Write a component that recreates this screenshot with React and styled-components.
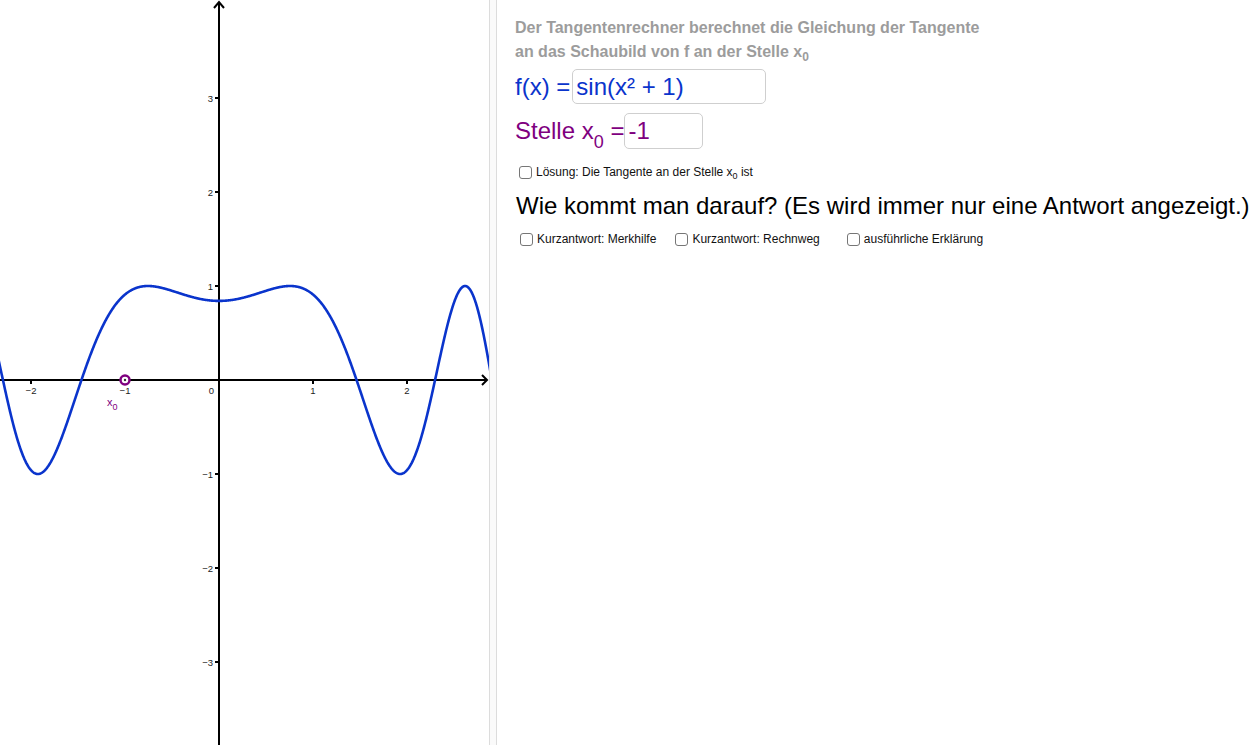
import React from 'react';
import styled, { createGlobalStyle } from 'styled-components';

const GlobalStyle = createGlobalStyle`
	html, body {
		margin: 0;
		padding: 0;
		background: #ffffff;
		overflow: hidden;
	}
	body {
		font-family: 'Liberation Sans', Arial, sans-serif;
	}
`;

const UNIT = 94;
const OX = 219;
const OY = 380;
const GRAPH_W = 489;
const GRAPH_H = 745;

const Page = styled.div`
	display: grid;
	grid-template-columns: ${GRAPH_W}px 8px 1fr;
	width: 1250px;
	height: 745px;
	overflow: hidden;
`;

const GraphPanel = styled.div`
	width: ${GRAPH_W}px;
	height: ${GRAPH_H}px;
	overflow: hidden;
`;

const Splitter = styled.div`
	border-left: 1px solid #dcdcdc;
	border-right: 1px solid #dcdcdc;
	background: #fafafa;
`;

const Algebra = styled.div`
	display: flex;
	flex-direction: column;
	align-items: flex-start;
	padding: 16px 0 0 18px;
	overflow: hidden;
	white-space: nowrap;
`;

const Intro = styled.p`
	margin: 0;
	font-size: 16px;
	font-weight: bold;
	line-height: 24px;
	color: #9c9c9c;
	sub {
		font-size: 12px;
		line-height: 0;
		vertical-align: -4px;
	}
`;

const InputRow = styled.div`
	display: flex;
	align-items: center;
	margin-top: ${({ top }) => top}px;
	color: ${({ color }) => color};
	font-size: 24px;
`;

const RowLabel = styled.span`
	padding-right: ${({ pad }) => pad}px;
	line-height: 28px;
	sub {
		font-size: 18px;
		line-height: 0;
		vertical-align: -9px;
	}
`;

const Field = styled.div`
	box-sizing: border-box;
	width: ${({ width }) => width}px;
	height: ${({ height }) => height}px;
	border: 1px solid #cfcfcf;
	border-radius: 5px;
	padding: 0 3px;
	display: flex;
	align-items: center;
	color: inherit;
`;

const CheckRow = styled.div`
	display: flex;
	align-items: center;
	margin-top: ${({ top }) => top}px;
`;

const Check = styled.label`
	display: flex;
	align-items: center;
	gap: 4px;
	font-size: 12px;
	line-height: 14px;
	color: #111;
	margin-left: ${({ indent }) => indent || 0}px;
	sub {
		font-size: 9px;
		line-height: 0;
		vertical-align: -3px;
	}
`;

const Box = styled.span`
	box-sizing: border-box;
	flex: none;
	width: 13px;
	height: 13px;
	border: 1px solid #767676;
	border-radius: 3px;
	background: #fff;
`;

const Question = styled.h2`
	margin: 13px 0 0 1px;
	font-size: 24px;
	font-weight: normal;
	color: #000;
	line-height: 28px;
`;

const TickLabel = styled.text`
	font-family: 'Liberation Sans', Arial, sans-serif;
	font-size: 9.5px;
	fill: #222;
`;

const sx = (x) => OX + UNIT * x;
const sy = (y) => OY - UNIT * y;

const curvePath = () => {
	const pts = [];
	for (let x = -2.4; x <= 2.9; x += 0.004) {
		pts.push(`${sx(x).toFixed(2)},${sy(Math.sin(x * x + 1)).toFixed(2)}`);
	}
	return 'M' + pts.join(' L');
};

const Graph = () => {
	const xTicks = [-2, -1, 1, 2];
	const yTicks = [3, 2, 1, -1, -2, -3];
	return (
		<svg width={GRAPH_W} height={GRAPH_H} viewBox={`0 0 ${GRAPH_W} ${GRAPH_H}`}>
			<line x1={0} y1={OY} x2={GRAPH_W - 2} y2={OY} stroke="#000" strokeWidth="2" />
			<polyline
				points={`${GRAPH_W - 7},${OY - 5} ${GRAPH_W - 2},${OY} ${GRAPH_W - 7},${OY + 5}`}
				fill="none"
				stroke="#000"
				strokeWidth="2"
			/>
			<line x1={OX} y1={2} x2={OX} y2={GRAPH_H} stroke="#000" strokeWidth="2" />
			<polyline
				points={`${OX - 5},${8} ${OX},${2} ${OX + 5},${8}`}
				fill="none"
				stroke="#000"
				strokeWidth="2"
			/>
			{xTicks.map((t) => (
				<g key={`x${t}`}>
					<line x1={sx(t)} y1={OY} x2={sx(t)} y2={OY + 4} stroke="#000" strokeWidth="2" />
					<TickLabel x={sx(t)} y={OY + 14} textAnchor="middle">
						{t < 0 ? `\u2212${-t}` : t}
					</TickLabel>
				</g>
			))}
			<TickLabel x={OX - 5} y={OY + 14} textAnchor="end">0</TickLabel>
			{yTicks.map((t) => (
				<g key={`y${t}`}>
					<line x1={OX - 4} y1={sy(t)} x2={OX} y2={sy(t)} stroke="#000" strokeWidth="2" />
					<TickLabel x={OX - 6} y={sy(t) + 3.5} textAnchor="end">
						{t < 0 ? `\u2212${-t}` : t}
					</TickLabel>
				</g>
			))}
			<path d={curvePath()} fill="none" stroke="#0a34cc" strokeWidth="2.6" strokeLinejoin="round" />
			<circle cx={sx(-1)} cy={OY} r="4.5" fill="#fff" stroke="#7f007f" strokeWidth="2.5" />
			<circle cx={sx(-1)} cy={OY} r="1.2" fill="#333" />
			<text x={107} y={406} fill="#7f007f" fontSize="11" fontFamily="'Liberation Sans', Arial, sans-serif">
				x
				<tspan fontSize="9" dy="4">0</tspan>
			</text>
		</svg>
	);
};

export default function App() {
	return (
		<>
			<GlobalStyle />
			<Page>
				<GraphPanel>
					<Graph />
				</GraphPanel>
				<Splitter />
				<Algebra>
					<Intro>
						Der Tangentenrechner berechnet die Gleichung der Tangente
						<br />
						an das Schaubild von f an der Stelle x<sub>0</sub>
					</Intro>
					<InputRow top={5} color="#0a34cc">
						<RowLabel pad={2}>f(x) =</RowLabel>
						<Field width={194} height={35}>sin(x² + 1)</Field>
					</InputRow>
					<InputRow top={9} color="#7f007f">
						<RowLabel pad={0}>
							Stelle x<sub>0</sub> =
						</RowLabel>
						<Field width={79} height={36}>-1</Field>
					</InputRow>
					<CheckRow top={16}>
						<Check indent={4}>
							<Box />
							<span>
								Lösung: Die Tangente an der Stelle x<sub>0</sub> ist
							</span>
						</Check>
					</CheckRow>
					<Question>Wie kommt man darauf? (Es wird immer nur eine Antwort angezeigt.)</Question>
					<CheckRow top={12}>
						<Check indent={5}>
							<Box />
							<span>Kurzantwort: Merkhilfe</span>
						</Check>
						<Check indent={19}>
							<Box />
							<span>Kurzantwort: Rechnweg</span>
						</Check>
						<Check indent={27}>
							<Box />
							<span>ausführliche Erklärung</span>
						</Check>
					</CheckRow>
				</Algebra>
			</Page>
		</>
	);
}
